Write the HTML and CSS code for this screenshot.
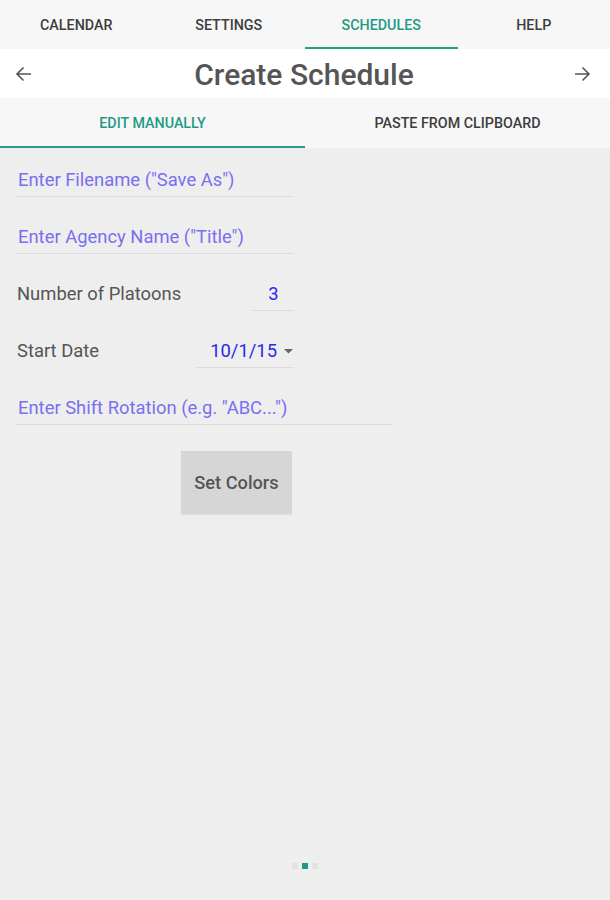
FILE: index.html
```html
<!DOCTYPE html>
<html>
<head>
<meta charset="utf-8">
<link rel="stylesheet" href="styles.css">
</head>
<body>
<div class="app">
  <nav class="topnav">
    <div class="tab">CALENDAR</div>
    <div class="tab">SETTINGS</div>
    <div class="tab active">SCHEDULES</div>
    <div class="tab">HELP</div>
  </nav>
  <header class="titlebar">
    <svg class="arrow" width="20" height="20" viewBox="0 0 20 20"><path d="M17 10H3.5M9.5 3.5L3 10l6.5 6.5" fill="none" stroke="#555" stroke-width="1.6"/></svg>
    <h1 class="title">Create Schedule</h1>
    <svg class="arrow" width="20" height="20" viewBox="0 0 20 20"><path d="M3 10h13.5M10.5 3.5L17 10l-6.5 6.5" fill="none" stroke="#555" stroke-width="1.6"/></svg>
  </header>
  <nav class="subnav">
    <div class="subtab active">EDIT MANUALLY</div>
    <div class="subtab">PASTE FROM CLIPBOARD</div>
  </nav>
  <main class="content">
    <div class="field wide1">Enter Filename ("Save As")</div>
    <div class="field wide1">Enter Agency Name ("Title")</div>
    <div class="row">
      <span class="label">Number of Platoons</span>
      <span class="value num">3</span>
    </div>
    <div class="row">
      <span class="label">Start Date</span>
      <span class="value date">10/1/15 <svg width="9" height="6" viewBox="0 0 9 6"><path d="M0 0h9L4.5 4.5z" fill="#666"/></svg></span>
    </div>
    <div class="field wide2">Enter Shift Rotation (e.g. "ABC...")</div>
    <div class="btnwrap"><div class="btn">Set Colors</div></div>
  </main>
  <div class="dots"><span class="dot"></span><span class="dot on"></span><span class="dot"></span></div>
</div>
</body>
</html>
```
FILE: styles.css
```css
* { box-sizing: border-box; margin: 0; padding: 0; }
html, body { width: 610px; height: 900px; }
body { font-family: Roboto, "Noto Sans", sans-serif; background: #eeeeee; overflow: hidden; }
.app { display: flex; flex-direction: column; height: 900px; }
.topnav { display: grid; grid-template-columns: repeat(4, 1fr); height: 49px; background: #f7f7f7; }
.tab { display: flex; align-items: center; justify-content: center; font-size: 14.3px; font-weight: 500; color: #3d3d3d; border-bottom: 2px solid transparent; padding-top: 3px; }
.tab.active { color: #1f9a86; border-bottom-color: #2a9d8a; }
.titlebar { height: 49px; background: #fff; display: flex; align-items: center; justify-content: space-between; padding: 1px 18px 0 14px; }
.title { font-size: 30px; font-weight: 500; color: #555; padding-left: 2px; }
.subnav { display: grid; grid-template-columns: 1fr 1fr; height: 50px; background: #f7f7f7; }
.subtab { display: flex; align-items: center; justify-content: center; font-size: 14.3px; font-weight: 500; color: #3d3d3d; border-bottom: 2px solid transparent; padding-top: 1px; }
.subtab.active { color: #1f9a86; border-bottom-color: #2a9d8a; }
.content { display: flex; flex-direction: column; padding: 21px 0 0 16px; }
.field { font-size: 18.4px; color: #7a6ff0; padding: 0 0 6px 2px; border-bottom: 1px solid #dcdcdc; height: 28px; margin-bottom: 29px; }
.wide1 { width: 278px; }
.wide2 { width: 377px; margin-bottom: 26px; }
.row { display: flex; justify-content: space-between; align-items: flex-start; width: 278px; height: 28px; margin-bottom: 29px; }
.label { font-size: 18.4px; color: #555; padding-left: 1px; }
.value { font-size: 18.4px; color: #2a2ae6; border-bottom: 1px solid #dcdcdc; height: 28px; display: flex; gap: 7px; justify-content: center; }
.num { width: 42px; padding-left: 1px; }
.date { width: 98px; justify-content: flex-end; padding-right: 1px; }
.date svg { margin-top: 9px; }
.btnwrap { display: flex; padding-left: 165px; }
.btn { width: 111px; height: 63px; background: #d6d6d6; color: #555; font-size: 18.2px; font-weight: 500; display: flex; align-items: center; justify-content: center; box-shadow: 0 1px 1px rgba(0,0,0,0.06); }
.dots { margin-top: auto; margin-bottom: 31px; display: flex; justify-content: center; gap: 4px; }
.dot { width: 6px; height: 6px; background: #e2e2e2; }
.dot.on { background: #1f9a86; }
```
